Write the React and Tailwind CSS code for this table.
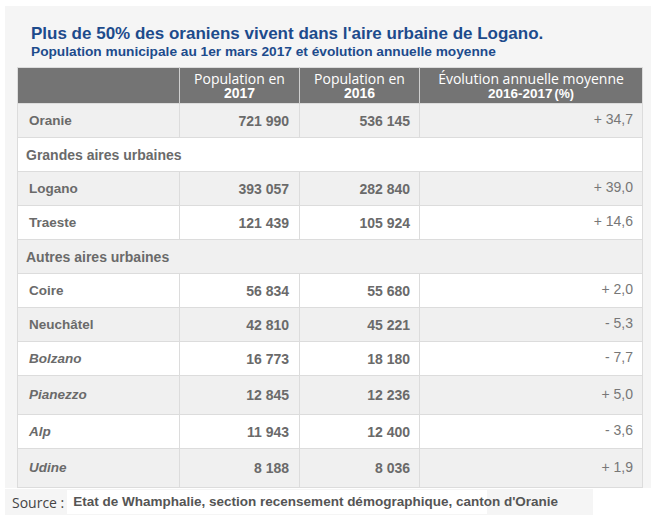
const rows = [
  { type: "data", name: "Oranie", a: "721 990", b: "536 145", evo: "+ 34,7", bg: "bg-[#f0f0f0]" },
  { type: "section", name: "Grandes aires urbaines", bg: "bg-white" },
  { type: "data", name: "Logano", a: "393 057", b: "282 840", evo: "+ 39,0", bg: "bg-[#f0f0f0]" },
  { type: "data", name: "Traeste", a: "121 439", b: "105 924", evo: "+ 14,6", bg: "bg-white" },
  { type: "section", name: "Autres aires urbaines", bg: "bg-[#f0f0f0]" },
  { type: "data", name: "Coire", a: "56 834", b: "55 680", evo: "+ 2,0", bg: "bg-white" },
  { type: "data", name: "Neuchâtel", a: "42 810", b: "45 221", evo: "- 5,3", bg: "bg-[#f0f0f0]" },
  { type: "data", name: "Bolzano", a: "16 773", b: "18 180", evo: "- 7,7", bg: "bg-white", italic: true },
  { type: "data", name: "Pianezzo", a: "12 845", b: "12 236", evo: "+ 5,0", bg: "bg-[#f0f0f0]", italic: true, tall: true },
  { type: "data", name: "Alp", a: "11 943", b: "12 400", evo: "- 3,6", bg: "bg-white", italic: true },
  { type: "data", name: "Udine", a: "8 188", b: "8 036", evo: "+ 1,9", bg: "bg-[#f0f0f0]", italic: true, tall: true },
];

const arial = "font-['Liberation_Sans',Arial,sans-serif]";
const open = "font-['Open_Sans',sans-serif]";

export default function App() {
  return (
    <div className="min-h-[526px] w-[661px] bg-white pt-[6px] pl-[5px]">
      {/* panel */}
      <div className={`w-[646px] bg-[#f5f5f5] pt-[18px] pl-[12px] ${arial}`}>
        <h1 className="ml-[14px] text-[17px] leading-[20px] font-bold text-[#1d4b8c]">
          Plus de 50% des oraniens vivent dans l'aire urbaine de Logano.
        </h1>
        <p className="ml-[14px] text-[13.7px] leading-[16px] font-bold text-[#1d4b8c]">
          Population municipale au 1er mars 2017 et évolution annuelle moyenne
        </p>

        <table className="mt-[7px] w-[625px] table-fixed border-collapse border border-[#dcdcdc]">
          <colgroup>
            <col className="w-[162px]" />
            <col className="w-[120px]" />
            <col className="w-[120px]" />
            <col className="w-[223px]" />
          </colgroup>
          <thead>
            <tr className="h-[36px] bg-[#747474] text-white">
              <th className="border-r border-[#cfcfcf]"></th>
              <th className="border-r border-[#cfcfcf] text-center">
                <div className={`${open} text-[14px] leading-[15px] font-medium`}>Population en</div>
                <div className="text-[14px] leading-[14px] font-bold">2017</div>
              </th>
              <th className="border-r border-[#cfcfcf] text-center">
                <div className={`${open} text-[14px] leading-[15px] font-medium`}>Population en</div>
                <div className="text-[14px] leading-[14px] font-bold">2016</div>
              </th>
              <th className="text-center">
                <div className={`${open} text-[14px] leading-[15px] font-normal`}>Évolution annuelle moyenne</div>
                <div className="leading-[14px] font-bold">
                  <span className="text-[13.5px]">2016-2017</span>
                  <span className="ml-[2px] text-[12.5px]">(%)</span>
                </div>
              </th>
            </tr>
          </thead>
          <tbody>
            {rows.map((r, i) =>
              r.type === "section" ? (
                <tr key={i} className={`h-[34px] ${r.bg} border-t border-[#dcdcdc]`}>
                  <td colSpan={4} className="pl-[8px] pt-[1px] text-[14px] font-bold text-[#6a6a6a]">
                    {r.name}
                  </td>
                </tr>
              ) : (
                <tr key={i} className={`${r.tall ? "h-[39px]" : "h-[34px]"} ${r.bg} border-t border-[#dcdcdc]`}>
                  <td className={`border-r border-[#dcdcdc] pl-[11px] pt-[1px] text-[13.5px] font-bold text-[#6a6a6a] ${r.italic ? "italic" : ""}`}>
                    {r.name}
                  </td>
                  <td className="border-r border-[#dcdcdc] pr-[10px] pt-[1px] text-right text-[14px] font-bold text-[#6a6a6a]">
                    {r.a}
                  </td>
                  <td className="border-r border-[#dcdcdc] pr-[9px] pt-[1px] text-right text-[14px] font-bold text-[#6a6a6a]">
                    {r.b}
                  </td>
                  <td className="pr-[9px] pb-[2px] text-right text-[14px] text-[#777777]">
                    {r.evo}
                  </td>
                </tr>
              )
            )}
          </tbody>
        </table>
      </div>

      {/* source */}
      <div className="mt-[1px] flex h-[26px] w-[588px] items-center bg-[#f5f5f5] pl-[7px]">
        <span className={`${open} text-[14px] text-[#444444]`}>Source :</span>
        <span
          className={`${arial} ml-[3px] bg-[linear-gradient(to_right,white_420px,transparent_420px)] py-[2px] pl-[6px] text-[13.5px] font-bold text-[#555555]`}
        >
          Etat de Whamphalie, section recensement démographique, canton d'Oranie
        </span>
      </div>
    </div>
  );
}
